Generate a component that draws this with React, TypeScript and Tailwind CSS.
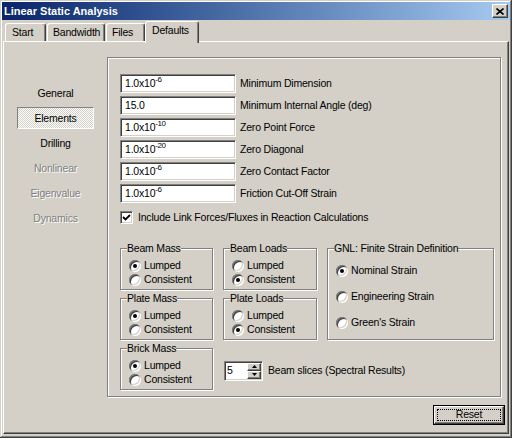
import React from 'react';

// Win2000-style bevels
const sunken =
  'border border-t-[#808080] border-l-[#808080] border-b-white border-r-white shadow-[inset_1px_1px_0_#404040,inset_-1px_-1px_0_#d4d0c8]';
const raised =
  'border border-t-white border-l-white border-b-[#404040] border-r-[#404040] shadow-[inset_-1px_-1px_0_#808080]';
const etched = 'border border-[#808080] shadow-[inset_1px_1px_0_#fff,1px_1px_0_#fff]';

function Radio({ checked }: { checked?: boolean }) {
  return (
    <span className="w-3 h-3 shrink-0 rounded-full bg-white shadow-[inset_1px_1px_0_#808080,inset_-1px_-1px_0_#fff,inset_2px_2px_0_#404040,inset_-2px_-2px_0_#d4d0c8] flex items-center justify-center">
      {checked && <span className="w-1 h-1 rounded-full bg-black" />}
    </span>
  );
}

function RadioRow({ label, checked }: { label: string; checked?: boolean }) {
  return (
    <div className="flex items-center h-[14px] gap-[3px] pl-[2px]">
      <Radio checked={checked} />
      <span className="whitespace-nowrap">{label}</span>
    </div>
  );
}

function Group({ title, lumped }: { title: string; lumped: boolean }) {
  return (
    <fieldset className={`h-[48px] px-[6px] ${etched}`}>
      <legend className="leading-[13px] px-0 bg-[#d4d0c8]">{title}</legend>
      <div className="flex flex-col pt-[4px]">
        <RadioRow label="Lumped" checked={lumped} />
        <RadioRow label="Consistent" checked={!lumped} />
      </div>
    </fieldset>
  );
}

function Sci({ exp }: { exp: string }) {
  return (
    <span>
      1.0x10<sup className="text-[8px] relative -top-[5px] tracking-[-0.5px]">{exp}</sup>
    </span>
  );
}

const fields: { value: React.ReactNode; label: string }[] = [
  { value: <Sci exp="-6" />, label: 'Minimum Dimension' },
  { value: '15.0', label: 'Minimum Internal Angle (deg)' },
  { value: <Sci exp="-10" />, label: 'Zero Point Force' },
  { value: <Sci exp="-20" />, label: 'Zero Diagonal' },
  { value: <Sci exp="-6" />, label: 'Zero Contact Factor' },
  { value: <Sci exp="-6" />, label: 'Friction Cut-Off Strain' },
];

const navItems = [
  { label: 'General' },
  { label: 'Elements', active: true },
  { label: 'Drilling' },
  { label: 'Nonlinear', disabled: true },
  { label: 'Eigenvalue', disabled: true },
  { label: 'Dynamics', disabled: true },
];

export default function App() {
  return (
    <div className="w-[512px] h-[438px] p-[2px] bg-[#d4d0c8] text-[10.5px] tracking-[-0.2px] text-black font-['Liberation_Sans',Arial,sans-serif] shadow-[inset_-1px_-1px_0_#404040,inset_1px_1px_0_#d4d0c8,inset_-2px_-2px_0_#808080,inset_2px_2px_0_#fff] overflow-hidden">
      {/* Title bar */}
      <div className="h-[18px] flex items-center justify-between pl-[2px] pr-[2px] bg-gradient-to-r from-[#0a246a] to-[#a6caf0]">
        <span className="text-white font-bold text-[11px] tracking-normal">Linear Static Analysis</span>
        <button className={`w-[16px] h-[14px] bg-[#d4d0c8] flex items-center justify-center ${raised}`}>
          <svg width="8" height="7" viewBox="0 0 8 7">
            <path d="M0.5 0.5 L7.5 6.5 M7.5 0.5 L0.5 6.5" stroke="#000" strokeWidth="1.6" />
          </svg>
        </button>
      </div>

      {/* Tabs */}
      <div className="flex items-end h-[21px] pl-[3px]">
        <div className="w-[41px] h-[18px] pl-[6px] flex items-center rounded-t-[3px] border-t border-l border-white border-r border-r-[#404040] shadow-[inset_-1px_0_0_#808080]">Start</div>
        <div className="ml-[1px] w-[58px] h-[18px] pl-[5px] flex items-center rounded-t-[3px] border-t border-l border-white border-r border-r-[#404040] shadow-[inset_-1px_0_0_#808080]">Bandwidth</div>
        <div className="ml-[1px] w-[39px] h-[18px] pl-[5px] flex items-center rounded-t-[3px] border-t border-l border-white border-r border-r-[#404040] shadow-[inset_-1px_0_0_#808080]">Files</div>
        <div className="relative z-10 -mb-[2px] w-[54px] h-[22px] pl-[6px] pb-[3px] flex items-center bg-[#d4d0c8] rounded-t-[3px] border-t border-l border-white border-r border-r-[#404040] shadow-[inset_-1px_0_0_#808080]">Defaults</div>
      </div>

      {/* Tab panel */}
      <div className={`h-[393px] mx-[1px] flex flex-col ${raised}`}>
        <div className="flex pt-[15px]">
          {/* Left nav */}
          <div className="w-[103px] flex flex-col items-center pt-[25px] gap-[3px]">
            {navItems.map((item) =>
              item.active ? (
                <div
                  key={item.label}
                  className="w-[77px] h-[22px] pt-[1px] flex items-center justify-center border border-t-[#808080] border-l-[#808080] border-b-white border-r-white bg-[repeating-conic-gradient(#fff_0_25%,#d4d0c8_0_50%)] bg-[length:2px_2px]"
                >
                  {item.label}
                </div>
              ) : (
                <div
                  key={item.label}
                  className={`w-[77px] h-[22px] pt-[2px] flex items-center justify-center ${
                    item.disabled ? 'text-[#808080] [text-shadow:1px_1px_0_#fff]' : ''
                  }`}
                >
                  {item.label}
                </div>
              )
            )}
          </div>

          {/* Main panel */}
          <div className={`w-[394px] h-[340px] pl-[12px] pt-[16px] ${etched}`}>
            <div className="flex flex-col gap-[3px]">
              {fields.map((f) => (
                <div key={f.label} className="flex items-center h-[19px]">
                  <div className={`w-[116px] h-[19px] pl-[4px] bg-white flex items-center ${sunken}`}>{f.value}</div>
                  <span className="ml-[4px] whitespace-nowrap">{f.label}</span>
                </div>
              ))}
            </div>

            <div className="mt-[8px] flex items-center h-[13px] gap-[5px]">
              <span className={`w-[13px] h-[13px] bg-white flex items-center justify-center ${sunken}`}>
                <svg width="9" height="9" viewBox="0 0 9 9">
                  <path d="M1 4 L3.5 6.5 L8 2" fill="none" stroke="#000" strokeWidth="1.8" />
                </svg>
              </span>
              <span className="whitespace-nowrap">Include Link Forces/Fluxes in Reaction Calculations</span>
            </div>

            <div className="mt-[18px] flex gap-[10px]">
              <div className="w-[93px] flex flex-col gap-[2px]">
                <Group title="Beam Mass" lumped />
                <Group title="Plate Mass" lumped />
              </div>
              <div className="w-[94px] flex flex-col gap-[2px]">
                <Group title="Beam Loads" lumped={false} />
                <Group title="Plate Loads" lumped={false} />
              </div>
              <fieldset className={`w-[167px] h-[98px] px-[6px] ${etched}`}>
                <legend className="leading-[13px] px-0 bg-[#d4d0c8]">GNL: Finite Strain Definition</legend>
                <div className="flex flex-col pt-[9px] gap-[12px]">
                  <RadioRow label="Nominal Strain" checked />
                  <RadioRow label="Engineering Strain" />
                  <RadioRow label="Green's Strain" />
                </div>
              </fieldset>
            </div>

            <div className="mt-[2px] flex gap-[10px]">
              <div className="w-[93px]">
                <Group title="Brick Mass" lumped />
              </div>
              <div className="mt-[9px] ml-[1px] flex items-center">
                <div className={`w-[39px] h-[20px] bg-white flex items-center justify-between pl-[2px] ${sunken}`}>
                  <span>5</span>
                  <div className="flex flex-col mr-[1px]">
                    <div className={`w-[14px] h-[8px] bg-[#d4d0c8] flex items-center justify-center ${raised}`}>
                      <svg width="5" height="3" viewBox="0 0 5 3"><path d="M2.5 0 L5 3 L0 3 Z" fill="#000" /></svg>
                    </div>
                    <div className={`w-[14px] h-[8px] bg-[#d4d0c8] flex items-center justify-center ${raised}`}>
                      <svg width="5" height="3" viewBox="0 0 5 3"><path d="M0 0 L5 0 L2.5 3 Z" fill="#000" /></svg>
                    </div>
                  </div>
                </div>
                <span className="ml-[5px] whitespace-nowrap">Beam slices (Spectral Results)</span>
              </div>
            </div>
          </div>
        </div>

        <div className="flex justify-end pr-[3px] pt-[8px]">
          <button className="w-[72px] h-[20px] border border-black bg-[#d4d0c8] p-0">
            <div className={`w-full h-full p-[2px] ${raised}`}>
              <div className="w-full h-full border border-dotted border-black flex items-center justify-center">Reset</div>
            </div>
          </button>
        </div>
      </div>
    </div>
  );
}
